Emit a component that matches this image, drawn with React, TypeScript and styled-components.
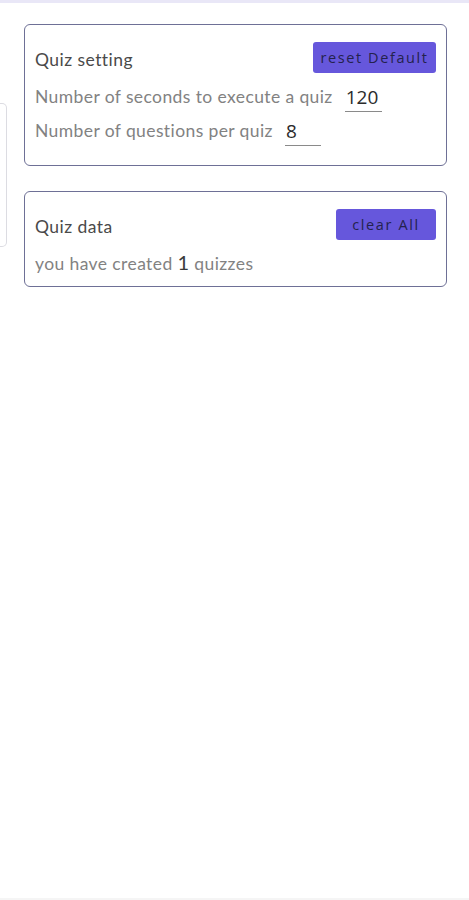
import React from 'react';
import styled, { createGlobalStyle } from 'styled-components';

const GlobalStyle = createGlobalStyle`
  html, body {
    margin: 0;
    padding: 0;
    background: #fff;
    font-family: Lato, 'Open Sans', sans-serif;
  }
`;

export default function App() {
  return (
    <Page>
      <GlobalStyle />
      <TopLine />
      <Main>
        <SideCard />
        <Column>
          <Card $bottom={19}>
            <CardHeader>
              <Title>Quiz setting</Title>
              <Button $width={123}>reset Default</Button>
            </CardHeader>
            <Fields>
              <Row>
                <Label>Number of seconds to execute a quiz</Label>
                <NumberInput type="text" defaultValue="120" $width={37} />
              </Row>
              <Row>
                <Label>Number of questions per quiz</Label>
                <NumberInput type="text" defaultValue="8" $width={36} />
              </Row>
            </Fields>
          </Card>

          <Card $bottom={11}>
            <CardHeader>
              <Title>Quiz data</Title>
              <Button $width={100}>clear All</Button>
            </CardHeader>
            <Info>
              you have created <Count>1</Count> quizzes
            </Info>
          </Card>
        </Column>
      </Main>
      <BottomLine />
    </Page>
  );
}

const Page = styled.div`
  width: 469px;
  height: 900px;
  display: flex;
  flex-direction: column;
  overflow: hidden;
`;
const TopLine = styled.div`
  height: 3px;
  background: #e9e7f7;
  flex-shrink: 0;
`;
const Main = styled.div`
  flex: 1;
  display: flex;
  align-items: flex-start;
  gap: 17px;
  padding-top: 21px;
`;
const SideCard = styled.div`
  width: 6px;
  height: 142px;
  margin-top: 79px;
  border: 1px solid #dcdce2;
  border-left: none;
  border-radius: 0 5px 5px 0;
  flex-shrink: 0;
`;
const Column = styled.div`
  width: 423px;
  display: flex;
  flex-direction: column;
  gap: 25px;
`;
const Card = styled.div<{ $bottom: number }>`
  box-sizing: border-box;
  border: 1px solid #6e7096;
  border-radius: 6px;
  padding: 17px 10px ${(p) => p.$bottom}px 10px;
`;
const CardHeader = styled.div`
  display: flex;
  justify-content: space-between;
  align-items: center;
  height: 31px;
`;
const Title = styled.span`
  font-size: 17.5px;
  line-height: 22px;
  letter-spacing: 0.45px;
  color: #4a4a4a;
  margin-top: 4px;
`;
const Button = styled.button<{ $width: number }>`
  width: ${(p) => p.$width}px;
  height: 31px;
  background: #6657dc;
  color: #24224d;
  border: none;
  border-radius: 3px;
  padding: 0;
  font-family: 'Open Sans', sans-serif;
  font-size: 14.5px;
  letter-spacing: 1.6px;
  cursor: pointer;
`;
const Fields = styled.div`
  display: flex;
  flex-direction: column;
  margin-top: 5px;
`;
const Row = styled.div`
  display: flex;
  align-items: flex-end;
  gap: 12px;
  height: 34px;
`;
const Label = styled.span`
  font-size: 17.5px;
  line-height: 22px;
  letter-spacing: 0.4px;
  color: #828282;
  padding-bottom: 4px;
`;
const NumberInput = styled.input<{ $width: number }>`
  width: ${(p) => p.$width}px;
  box-sizing: border-box;
  border: none;
  border-bottom: 1px solid #8a8a8a;
  outline: none;
  padding: 0 0 2px 1px;
  font-family: 'Open Sans', sans-serif;
  font-size: 19px;
  line-height: 24px;
  color: #2b2b2b;
  background: transparent;
`;
const Info = styled.div`
  margin-top: 11px;
  font-size: 17.5px;
  line-height: 22px;
  letter-spacing: 0.4px;
  color: #828282;
`;
const Count = styled.span`
  font-size: 20px;
  color: #3a3a3a;
`;
const BottomLine = styled.div`
  height: 2px;
  background: #f5f5f5;
  flex-shrink: 0;
`;
